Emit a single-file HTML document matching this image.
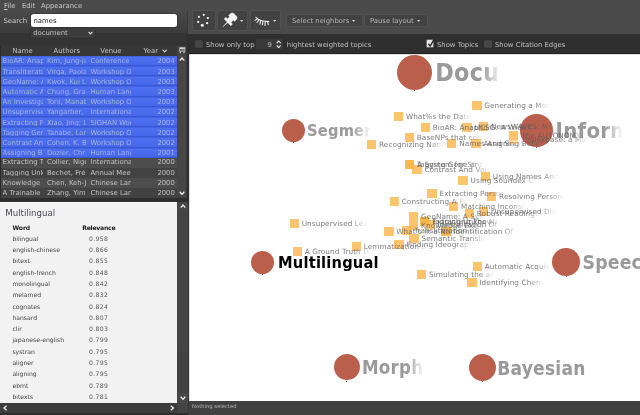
<!DOCTYPE html>
<html><head><meta charset="utf-8"><title>Topic browser</title>
<style>
html,body{margin:0;padding:0;}
body{width:640px;height:415px;overflow:hidden;background:#4a4a4a;position:relative;font-family:"DejaVu Sans","Liberation Sans",sans-serif;font-size:6.85px;color:#d0d0d0;}
.abs{position:absolute;}
.t{position:absolute;white-space:nowrap;line-height:1;}

#left{left:0;top:0;width:189px;height:415px;background:#3b3b3b;}
#search{left:30.5px;top:14px;width:146.5px;height:13px;background:#fff;border-radius:2.5px;box-shadow:0 0 0 0.6px #2a2a2a;}
#sel{left:30.5px;top:27.8px;width:64.5px;height:10.4px;background:#3c3c3c;border-radius:1.5px;box-shadow:0 0 0 0.5px #2c2c2c;}
#thead{left:1px;top:46.3px;width:185.5px;height:9.4px;background:#373737;}
.row{position:absolute;left:1px;width:175.8px;height:10.21px;box-sizing:border-box;overflow:hidden;}
.row.sel{background:linear-gradient(#4d70f0,#4567e8);border-top:0.5px solid #4262e0;border-bottom:0.9px solid #3857d4;color:#a6b1e0;}
.row.odd{background:#4d4d4d;color:#c2c2c2;}
.row.even{background:#424242;color:#c2c2c2;}
.row span{position:absolute;top:1.6px;white-space:nowrap;overflow:hidden;line-height:1;}
.c1{left:1.6px;width:40.4px;}
.c2{left:45.9px;width:39.4px;}
.c3{left:89.4px;width:41px;}
.c4{right:2px;text-align:right;}
#info{left:0;top:201.8px;width:177.2px;height:201.6px;background:#f2f2f2;color:#444;box-shadow:inset 0 0.8px 0 #fff;}
#tb2{left:187.4px;top:34.4px;width:452.6px;height:19.4px;background:#2f2f2f;}
#canvas{left:189.2px;top:54px;width:450.8px;height:346.6px;background:#fff;overflow:hidden;box-shadow:inset 0.5px 0.5px 0 #bbb;}
#status{left:189px;top:400.6px;width:451px;height:14.4px;background:#404040;}
.btn{position:absolute;background:#424242;border-radius:1.5px;box-shadow:0 0 0 0.7px #555;}
.sq{position:absolute;width:9.4px;height:9px;background:rgba(253,180,70,0.78);}
.lbl{position:absolute;white-space:nowrap;line-height:1;font-size:7.3px;letter-spacing:0.08px;color:rgba(88,88,88,0.78);width:66px;overflow:hidden;
 -webkit-mask-image:linear-gradient(to right,#000 0,#000 50px,rgba(0,0,0,0.35) 60px,transparent 66px);mask-image:linear-gradient(to right,#000 0,#000 50px,rgba(0,0,0,0.35) 60px,transparent 66px);}
.circ{position:absolute;border-radius:50%;background:#bb5f4d;}
.tl{position:absolute;white-space:nowrap;line-height:1;font-family:"DejaVu Sans Condensed","DejaVu Sans","Liberation Sans",sans-serif;font-weight:bold;overflow:hidden;letter-spacing:0.012em;}
.cb{position:absolute;width:6.2px;height:6.2px;background:#464646;border-radius:0.6px;box-shadow:0 0 0 0.6px #555;}
.chev{position:absolute;}
</style></head><body><div id="app" style="position:absolute;left:0;top:0;width:640px;height:415px;will-change:transform">

<div id="left" class="abs"></div>
<div class="abs" style="left:0;top:0;width:640px;height:34.4px;background:#4a4a4a"></div>
<div class="abs" style="left:0;top:33.4px;width:187.3px;height:12.9px;background:#343434"></div>
<div class="abs" style="left:0;top:11px;width:187.3px;height:22.4px;background:linear-gradient(#4a4a4a,#3b3b3b)"></div>
<div class="t" style="left:4px;top:3.3px;color:#c8c8c8"><u>F</u>ile</div>
<div class="t" style="left:22px;top:3.3px;color:#c8c8c8">Edit</div>
<div class="t" style="left:41px;top:3.3px;color:#c8c8c8">Appearance</div>
<div class="t" style="left:3.5px;top:18px;color:#c8c8c8">Search</div>
<div id="search" class="abs"></div><div class="t" style="left:33.5px;top:18.3px;color:#222">names</div>
<div id="sel" class="abs"></div><div class="t" style="left:33.2px;top:30.1px;color:#c4c4c4">document</div>
<svg class="chev" style="left:87.5px;top:31px" width="5" height="4" viewBox="0 0 5 4"><path d="M0.6 0.8 L2.5 2.9 L4.4 0.8" fill="none" stroke="#e0e0e0" stroke-width="1.1"/></svg>
<div id="thead" class="abs"></div>
<div class="abs" style="left:0;top:46.3px;width:1px;height:153px;background:#2a2a2a"></div>
<div class="t" style="left:12.5px;top:47.6px;color:#c4c4c4">Name</div>
<div class="t" style="left:53.5px;top:47.6px;color:#c4c4c4">Authors</div>
<div class="t" style="left:100.3px;top:47.6px;color:#c4c4c4">Venue</div>
<div class="t" style="left:143.5px;top:47.6px;color:#c4c4c4">Year</div>
<svg class="chev" style="left:161.8px;top:49.3px" width="5.4" height="4" viewBox="0 0 5.4 4"><path d="M0.6 0.7 L2.7 3 L4.8 0.7" fill="none" stroke="#d8d8d8" stroke-width="1.1"/></svg>
<div class="abs" style="left:176.8px;top:46.3px;width:9.7px;height:9.4px;background:#444"></div>
<svg class="chev" style="left:179px;top:47px" width="7" height="7" viewBox="0 0 7 7"><rect x="0.4" y="0.3" width="5.8" height="4.2" fill="#cfcfcf"/><rect x="1" y="2" width="4.6" height="0.7" fill="#444"/><rect x="1" y="3.3" width="4.6" height="0.6" fill="#444"/><rect x="0.8" y="4.5" width="1.2" height="1.6" fill="#cfcfcf"/><rect x="4.4" y="4.5" width="1.2" height="1.6" fill="#cfcfcf"/></svg>
<div class="row sel" style="top:55.70px"><span class="c1">BioAR: Anaphora Resolution</span><span class="c2">Kim, Jung-jae</span><span class="c3">Conference</span><span class="c4">2004</span></div>
<div class="row sel" style="top:65.91px"><span class="c1">Transliteration of Proper</span><span class="c2">Virga, Paola</span><span class="c3">Workshop On</span><span class="c4">2003</span></div>
<div class="row sel" style="top:76.12px"><span class="c1">GeoName: A System</span><span class="c2">Kwok, Kui Lam</span><span class="c3">Workshop On</span><span class="c4">2003</span></div>
<div class="row sel" style="top:86.33px"><span class="c1">Automatic Acquisition</span><span class="c2">Chung, Grace</span><span class="c3">Human Lang</span><span class="c4">2003</span></div>
<div class="row sel" style="top:96.54px"><span class="c1">An Investigation of</span><span class="c2">Torii, Manabu</span><span class="c3">Workshop On</span><span class="c4">2003</span></div>
<div class="row sel" style="top:106.75px"><span class="c1">Unsupervised Learning</span><span class="c2">Yangarber, Roman</span><span class="c3">International</span><span class="c4">2002</span></div>
<div class="row sel" style="top:116.96px"><span class="c1">Extracting Pronunciation</span><span class="c2">Xiao, Jing; Liu</span><span class="c3">SIGHAN Workshop</span><span class="c4">2002</span></div>
<div class="row sel" style="top:127.17px"><span class="c1">Tagging Gene and</span><span class="c2">Tanabe, Lorraine</span><span class="c3">Workshop On</span><span class="c4">2002</span></div>
<div class="row sel" style="top:137.38px"><span class="c1">Contrast And Variability</span><span class="c2">Cohen, K. B.</span><span class="c3">Workshop On</span><span class="c4">2002</span></div>
<div class="row sel" style="top:147.59px"><span class="c1">Assigning Belief Scores</span><span class="c2">Dozier, Chris</span><span class="c3">Human Lang</span><span class="c4">2001</span></div>
<div class="row odd" style="top:157.80px"><span class="c1">Extracting The Names</span><span class="c2">Collier, Nigel</span><span class="c3">International</span><span class="c4">2000</span></div>
<div class="row even" style="top:168.01px"><span class="c1">Tagging Unknown</span><span class="c2">Bechet, Frédéric</span><span class="c3">Annual Meeting</span><span class="c4">2000</span></div>
<div class="row odd" style="top:178.22px"><span class="c1">Knowledge Extraction</span><span class="c2">Chen, Keh-Jiann</span><span class="c3">Chinese Lang</span><span class="c4">2000</span></div>
<div class="row even" style="top:188.43px"><span class="c1">A Trainable Method</span><span class="c2">Zhang, Yimin</span><span class="c3">Chinese Lang</span><span class="c4">2000</span></div>
<div class="abs" style="left:176.8px;top:55.7px;width:9.7px;height:141.8px;background:#464646"></div>
<div class="abs" style="left:176.8px;top:65.5px;width:9.7px;height:114px;background:#464646"></div>
<div class="abs" style="left:176.8px;top:189.4px;width:9.7px;height:8.1px;background:#464646"></div>
<div class="abs" style="left:176.8px;top:55.7px;width:9.7px;height:9.3px;background:#464646"></div>
<svg class="chev" style="left:178.8px;top:57.4px" width="6" height="4.4" viewBox="0 0 6 4.4"><path d="M0.7 3.6 L3 1 L5.3 3.6" fill="none" stroke="#f0f0f0" stroke-width="1.3"/></svg>
<svg class="chev" style="left:178.8px;top:190.8px" width="6" height="4.4" viewBox="0 0 6 4.4"><path d="M0.7 0.8 L3 3.4 L5.3 0.8" fill="none" stroke="#f0f0f0" stroke-width="1.3"/></svg>
<div class="abs" style="left:0;top:197.5px;width:189px;height:4.4px;background:#2e2e2e"></div>
<div id="info" class="abs"></div>
<div class="t" style="left:5.3px;top:208.8px;font-size:8.6px;color:#4a4650">Multilingual</div>
<div class="t" style="left:12.4px;top:225.0px;font-size:6.1px;letter-spacing:-0.1px;font-weight:bold;color:#1a1a1a">Word</div>
<div class="t" style="left:82.3px;top:225.0px;font-size:6.1px;letter-spacing:-0.25px;font-weight:bold;color:#1a1a1a">Relevance</div>
<div class="t" style="left:12.4px;top:235.7px;font-size:6.1px;color:#444">bilingual</div>
<div class="t" style="left:89px;top:235.7px;font-size:6.1px;letter-spacing:0.35px;color:#555">0.958</div>
<div class="t" style="left:12.4px;top:247.0px;font-size:6.1px;color:#444">english-chinese</div>
<div class="t" style="left:89px;top:247.0px;font-size:6.1px;letter-spacing:0.35px;color:#555">0.866</div>
<div class="t" style="left:12.4px;top:258.3px;font-size:6.1px;color:#444">bitext</div>
<div class="t" style="left:89px;top:258.3px;font-size:6.1px;letter-spacing:0.35px;color:#555">0.855</div>
<div class="t" style="left:12.4px;top:269.6px;font-size:6.1px;color:#444">english-french</div>
<div class="t" style="left:89px;top:269.6px;font-size:6.1px;letter-spacing:0.35px;color:#555">0.848</div>
<div class="t" style="left:12.4px;top:280.9px;font-size:6.1px;color:#444">monolingual</div>
<div class="t" style="left:89px;top:280.9px;font-size:6.1px;letter-spacing:0.35px;color:#555">0.842</div>
<div class="t" style="left:12.4px;top:292.2px;font-size:6.1px;color:#444">melamed</div>
<div class="t" style="left:89px;top:292.2px;font-size:6.1px;letter-spacing:0.35px;color:#555">0.832</div>
<div class="t" style="left:12.4px;top:303.5px;font-size:6.1px;color:#444">cognates</div>
<div class="t" style="left:89px;top:303.5px;font-size:6.1px;letter-spacing:0.35px;color:#555">0.824</div>
<div class="t" style="left:12.4px;top:314.8px;font-size:6.1px;color:#444">hansard</div>
<div class="t" style="left:89px;top:314.8px;font-size:6.1px;letter-spacing:0.35px;color:#555">0.807</div>
<div class="t" style="left:12.4px;top:326.1px;font-size:6.1px;color:#444">clir</div>
<div class="t" style="left:89px;top:326.1px;font-size:6.1px;letter-spacing:0.35px;color:#555">0.803</div>
<div class="t" style="left:12.4px;top:337.4px;font-size:6.1px;color:#444">japanese-english</div>
<div class="t" style="left:89px;top:337.4px;font-size:6.1px;letter-spacing:0.35px;color:#555">0.799</div>
<div class="t" style="left:12.4px;top:348.7px;font-size:6.1px;color:#444">systran</div>
<div class="t" style="left:89px;top:348.7px;font-size:6.1px;letter-spacing:0.35px;color:#555">0.795</div>
<div class="t" style="left:12.4px;top:360.0px;font-size:6.1px;color:#444">aligner</div>
<div class="t" style="left:89px;top:360.0px;font-size:6.1px;letter-spacing:0.35px;color:#555">0.795</div>
<div class="t" style="left:12.4px;top:371.3px;font-size:6.1px;color:#444">aligning</div>
<div class="t" style="left:89px;top:371.3px;font-size:6.1px;letter-spacing:0.35px;color:#555">0.795</div>
<div class="t" style="left:12.4px;top:382.6px;font-size:6.1px;color:#444">ebmt</div>
<div class="t" style="left:89px;top:382.6px;font-size:6.1px;letter-spacing:0.35px;color:#555">0.789</div>
<div class="t" style="left:12.4px;top:393.9px;font-size:6.1px;color:#444">bitexts</div>
<div class="t" style="left:89px;top:393.9px;font-size:6.1px;letter-spacing:0.35px;color:#555">0.781</div>
<div class="abs" style="left:177.2px;top:201.8px;width:10.7px;height:201.6px;background:#424242"></div>
<div class="abs" style="left:177.2px;top:201.8px;width:10.7px;height:9.4px;background:#464646"></div>
<div class="abs" style="left:177.2px;top:393.3px;width:10.7px;height:10.1px;background:#484848"></div>
<div class="abs" style="left:177.2px;top:211.2px;width:10.7px;height:140px;background:#444"></div>
<svg class="chev" style="left:179.6px;top:204.4px" width="6" height="4.4" viewBox="0 0 6 4.4"><path d="M0.7 3.6 L3 1 L5.3 3.6" fill="none" stroke="#f0f0f0" stroke-width="1.3"/></svg>
<svg class="chev" style="left:179.6px;top:396.3px" width="6" height="4.4" viewBox="0 0 6 4.4"><path d="M0.7 0.8 L3 3.4 L5.3 0.8" fill="none" stroke="#f0f0f0" stroke-width="1.3"/></svg>
<div class="abs" style="left:0;top:403.4px;width:177.2px;height:9.6px;background:#3c3c3c"></div>
<div class="abs" style="left:177.2px;top:403.4px;width:10.7px;height:9.6px;background:#444"></div>
<div class="abs" style="left:0;top:412.7px;width:640px;height:2.3px;background:#2e2e2e"></div>
<svg class="chev" style="left:3.2px;top:405.2px" width="4.4" height="6" viewBox="0 0 4.4 6"><path d="M3.6 0.7 L1 3 L3.6 5.3" fill="none" stroke="#f0f0f0" stroke-width="1.3"/></svg>
<svg class="chev" style="left:170.2px;top:405.2px" width="4.4" height="6" viewBox="0 0 4.4 6"><path d="M0.8 0.7 L3.4 3 L0.8 5.3" fill="none" stroke="#f0f0f0" stroke-width="1.3"/></svg>
<div class="abs" style="left:187.2px;top:11px;width:1.2px;height:23.4px;background:#3a3a3a"></div>
<div class="abs" style="left:186.6px;top:34.4px;width:2.6px;height:167.6px;background:#2e2e2e"></div>
<div class="abs" style="left:187.9px;top:201.8px;width:1.3px;height:213.2px;background:#383838"></div>
<div id="tb2" class="abs"></div>
<div class="abs" style="left:189px;top:52.8px;width:451px;height:1.2px;background:#222"></div>
<div class="btn" style="left:192.5px;top:11.3px;width:22.5px;height:18.3px"></div>
<div class="btn" style="left:218.4px;top:11.3px;width:28.9px;height:18.3px"></div>
<div class="btn" style="left:251px;top:11.3px;width:29.3px;height:18.3px"></div>
<div class="btn" style="left:286.7px;top:14.5px;width:75px;height:11.9px"></div>
<div class="btn" style="left:365px;top:14.5px;width:61.7px;height:11.9px"></div>
<div class="t" style="left:292px;top:17.8px;color:#b4b4b4">Select neighbors</div>
<div class="t" style="left:370px;top:17.8px;color:#b4b4b4">Pause layout</div>
<svg class="chev" style="left:352.4px;top:20.2px" width="3.2" height="2" viewBox="0 0 3.2 2"><path d="M0 0 H3.2 L1.6 2 Z" fill="#d0d0d0"/></svg>
<svg class="chev" style="left:417.4px;top:20.2px" width="3.2" height="2" viewBox="0 0 3.2 2"><path d="M0 0 H3.2 L1.6 2 Z" fill="#d0d0d0"/></svg>
<svg class="chev" style="left:240.3px;top:19.6px" width="3.2" height="2" viewBox="0 0 3.2 2"><path d="M0 0 H3.2 L1.6 2 Z" fill="#d0d0d0"/></svg>
<svg class="chev" style="left:273.2px;top:19.9px" width="3.2" height="2" viewBox="0 0 3.2 2"><path d="M0 0 H3.2 L1.6 2 Z" fill="#d0d0d0"/></svg>
<svg class="chev" style="left:196.3px;top:13.2px" width="14" height="14" viewBox="0 0 14 14"><circle cx="7.72" cy="1.85" r="1.1" fill="#f2f2f2"/><circle cx="11.82" cy="5.05" r="1.15" fill="#f2f2f2"/><circle cx="11.10" cy="10.20" r="1.15" fill="#f2f2f2"/><circle cx="6.28" cy="12.15" r="1.5" fill="#f2f2f2"/><circle cx="2.18" cy="8.95" r="1.1" fill="#f2f2f2"/><circle cx="2.90" cy="3.80" r="1.1" fill="#f2f2f2"/></svg>
<svg class="chev" style="left:216px;top:8px" width="34" height="24" viewBox="0 0 34 24"><path d="M6.65 19.08 L11.08 14.10 L8.34 11.29 L8.39 10.51 L9.43 9.51 L10.20 9.47 L11.49 10.80 L13.65 8.70 L12.68 7.71 L12.89 7.10 L14.88 5.16 L16.31 4.81 L17.78 5.40 L20.60 8.30 L21.15 9.78 L20.77 11.20 L18.78 13.14 L18.17 13.34 L17.20 12.34 L15.04 14.44 L16.34 15.77 L16.28 16.54 L15.25 17.55 L14.47 17.58 L11.73 14.77 Z" fill="#f2f2f2" stroke="#f2f2f2" stroke-width="0.3" stroke-linejoin="round"/></svg>
<svg class="chev" style="left:249px;top:8px" width="34" height="24" viewBox="0 0 34 24"><g fill="none" stroke="#f2f2f2" stroke-width="1.05" stroke-linecap="round"><path d="M6.9 9.3 C8.4 11 10.6 12.2 13 12.8 C15.4 13.3 17.8 13.4 19.9 13.4"/><path d="M7.9 11.1 L5.9 12.4"/><path d="M9.6 12.2 L8 14.5"/><path d="M11.7 13 L10.8 16.1"/><path d="M13.9 13.4 L13.4 16.8"/><path d="M16.2 13.6 L16 17.5"/><path d="M18.5 13.6 L19.3 16.7"/></g></svg>
<div class="cb" style="left:195.8px;top:41.2px"></div>
<div class="t" style="left:206px;top:41.5px;color:#c0c0c0">Show only top</div>
<div class="abs" style="left:256.3px;top:38.8px;width:27.2px;height:10.4px;background:#3a3a3a;border-radius:1.5px"></div>
<div class="t" style="left:267.5px;top:41.5px;color:#c0c0c0">9</div>
<svg class="chev" style="left:275.6px;top:39.8px" width="5.4" height="8.6" viewBox="0 0 5.4 8.6"><path d="M0.7 3.2 L2.7 1 L4.7 3.2 M0.7 5.4 L2.7 7.6 L4.7 5.4" fill="none" stroke="#eee" stroke-width="1.1"/></svg>
<div class="t" style="left:286.8px;top:41.5px;color:#c0c0c0">hightest weighted topics</div>
<div class="cb" style="left:427.3px;top:40.4px;background:#e6e6e6;box-shadow:0 0 0 0.6px #999"></div>
<svg class="chev" style="left:427px;top:38.6px" width="8" height="9" viewBox="0 0 8 9"><path d="M1.4 4.8 L3.2 7 L6.6 1.2" fill="none" stroke="#222" stroke-width="1.3"/></svg>
<div class="t" style="left:437px;top:41.5px;color:#c0c0c0">Show Topics</div>
<div class="cb" style="left:484.6px;top:40.6px"></div>
<div class="t" style="left:495px;top:41.5px;color:#c0c0c0">Show Citation Edges</div>
<div id="canvas" class="abs">
<div class="circ" style="left:207.8px;top:0.6px;width:35.2px;height:35.2px"></div>
<div class="abs" style="left:224.9px;top:36.2px;width:1px;height:1px;background:#766"></div>
<div class="circ" style="left:92.7px;top:65.0px;width:23px;height:23px"></div>
<div class="abs" style="left:103.7px;top:88.4px;width:1px;height:1px;background:#766"></div>
<div class="circ" style="left:331.3px;top:60.3px;width:32.5px;height:32.5px"></div>
<div class="abs" style="left:347.1px;top:93.2px;width:1px;height:1px;background:#766"></div>
<div class="circ" style="left:62.3px;top:196.5px;width:23px;height:23px"></div>
<div class="abs" style="left:73.3px;top:219.9px;width:1px;height:1px;background:#766"></div>
<div class="circ" style="left:363.1px;top:194.0px;width:28px;height:28px"></div>
<div class="abs" style="left:376.6px;top:222.4px;width:1px;height:1px;background:#766"></div>
<div class="circ" style="left:144.8px;top:300.2px;width:26px;height:26px"></div>
<div class="abs" style="left:157.3px;top:326.6px;width:1px;height:1px;background:#766"></div>
<div class="circ" style="left:279.5px;top:299.5px;width:27px;height:27px"></div>
<div class="abs" style="left:292.5px;top:326.9px;width:1px;height:1px;background:#766"></div>
<div class="tl" style="left:246.0px;top:6.5px;font-size:24.8px;color:#9a9a9a;height:31.0px;width:66px;-webkit-mask-image:linear-gradient(to right,#000 0,#000 48px,transparent 66px);mask-image:linear-gradient(to right,#000 0,#000 48px,transparent 66px);">Document</div>
<div class="tl" style="left:117.9px;top:68.6px;font-size:16.3px;color:#9a9a9a;height:20.4px;width:64px;-webkit-mask-image:linear-gradient(to right,#000 0,#000 46px,transparent 64px);mask-image:linear-gradient(to right,#000 0,#000 46px,transparent 64px);">Segmentation</div>
<div class="tl" style="left:366.4px;top:66.2px;font-size:22px;color:#9a9a9a;height:27.5px;width:67px;-webkit-mask-image:linear-gradient(to right,#000 0,#000 48px,transparent 67px);mask-image:linear-gradient(to right,#000 0,#000 48px,transparent 67px);">Information</div>
<div class="tl" style="left:88.9px;top:200.5px;font-size:16.3px;color:#000;height:20.4px;">Multilingual</div>
<div class="tl" style="left:393.3px;top:198.7px;font-size:19.2px;color:#9a9a9a;height:24.0px;width:80px;-webkit-mask-image:linear-gradient(to right,#000 0,#000 58px,transparent 80px);mask-image:linear-gradient(to right,#000 0,#000 58px,transparent 80px);">Speech</div>
<div class="tl" style="left:172.7px;top:304.9px;font-size:18.6px;color:#9a9a9a;height:23.2px;width:62px;-webkit-mask-image:linear-gradient(to right,#000 0,#000 45px,transparent 62px);mask-image:linear-gradient(to right,#000 0,#000 45px,transparent 62px);">Morphology</div>
<div class="tl" style="left:308.1px;top:304.7px;font-size:19px;color:#9a9a9a;height:23.8px;">Bayesian</div>
<div class="sq" style="left:283.0px;top:47.1px"></div>
<div class="sq" style="left:204.6px;top:57.5px"></div>
<div class="sq" style="left:231.5px;top:68.9px"></div>
<div class="sq" style="left:273.2px;top:68.5px"></div>
<div class="sq" style="left:289.6px;top:67.9px"></div>
<div class="sq" style="left:215.5px;top:78.8px"></div>
<div class="sq" style="left:177.7px;top:86.0px"></div>
<div class="sq" style="left:257.9px;top:84.5px"></div>
<div class="sq" style="left:282.1px;top:85.0px"></div>
<div class="sq" style="left:319.9px;top:76.5px"></div>
<div class="sq" style="left:215.5px;top:105.6px"></div>
<div class="sq" style="left:215.7px;top:105.8px"></div>
<div class="sq" style="left:223.1px;top:110.8px"></div>
<div class="sq" style="left:269.3px;top:121.8px"></div>
<div class="sq" style="left:291.5px;top:117.9px"></div>
<div class="sq" style="left:238.2px;top:135.0px"></div>
<div class="sq" style="left:297.8px;top:137.7px"></div>
<div class="sq" style="left:200.4px;top:143.2px"></div>
<div class="sq" style="left:259.8px;top:147.5px"></div>
<div class="sq" style="left:275.5px;top:154.7px"></div>
<div class="sq" style="left:289.7px;top:152.5px"></div>
<div class="sq" style="left:219.8px;top:157.5px"></div>
<div class="sq" style="left:219.8px;top:167.1px"></div>
<div class="sq" style="left:230.6px;top:162.5px"></div>
<div class="sq" style="left:230.9px;top:162.8px"></div>
<div class="sq" style="left:236.1px;top:165.9px"></div>
<div class="sq" style="left:195.0px;top:173.2px"></div>
<div class="sq" style="left:212.6px;top:172.1px"></div>
<div class="sq" style="left:252.1px;top:172.5px"></div>
<div class="sq" style="left:252.3px;top:172.7px"></div>
<div class="sq" style="left:220.2px;top:179.9px"></div>
<div class="sq" style="left:205.1px;top:186.2px"></div>
<div class="sq" style="left:162.4px;top:188.0px"></div>
<div class="sq" style="left:100.4px;top:164.5px"></div>
<div class="sq" style="left:103.4px;top:193.1px"></div>
<div class="sq" style="left:227.7px;top:215.7px"></div>
<div class="sq" style="left:283.4px;top:207.5px"></div>
<div class="sq" style="left:278.1px;top:223.8px"></div>
<div class="lbl" style="left:295.1px;top:48.2px;height:9.2px">Generating a Morphological</div>
<div class="lbl" style="left:216.7px;top:58.6px;height:9.2px">What%s the Date?</div>
<div class="lbl" style="left:243.6px;top:70.0px;height:9.2px">BioAR: Anaphora Resolution</div>
<div class="lbl" style="left:285.3px;top:69.6px;height:9.2px">UCSG: A Wide Coverage</div>
<div class="lbl" style="left:301.7px;top:69.0px;height:9.2px">NewsWAVES: M&amp;I Disambiguation</div>
<div class="lbl" style="left:227.6px;top:79.9px;height:9.2px">BaseNPs that contain</div>
<div class="lbl" style="left:189.8px;top:87.1px;height:9.2px">Recognizing Names in</div>
<div class="lbl" style="left:270.0px;top:85.6px;height:9.2px">Names And Similarities</div>
<div class="lbl" style="left:294.2px;top:86.1px;height:9.2px">Assigning Belief Scores</div>
<div class="lbl" style="left:332.0px;top:77.6px;height:9.2px">The AUTONOMY System</div>
<div class="lbl" style="left:227.6px;top:106.7px;height:9.2px">Tagging Gene and</div>
<div class="lbl" style="left:227.8px;top:106.9px;height:9.2px">A System for String</div>
<div class="lbl" style="left:235.2px;top:111.9px;height:9.2px">Contrast And Variability</div>
<div class="lbl" style="left:281.4px;top:122.9px;height:9.2px">Using Soundex Codes</div>
<div class="lbl" style="left:303.6px;top:119.0px;height:9.2px">Using Names And Topics</div>
<div class="lbl" style="left:250.3px;top:136.1px;height:9.2px">Extracting Personal</div>
<div class="lbl" style="left:309.9px;top:138.8px;height:9.2px">Resolving Personal</div>
<div class="lbl" style="left:212.5px;top:144.3px;height:9.2px">Constructing A Proper</div>
<div class="lbl" style="left:271.9px;top:148.6px;height:9.2px">Matching Inconsistently</div>
<div class="lbl" style="left:287.6px;top:155.8px;height:9.2px">Robust Reading: Identification</div>
<div class="lbl" style="left:301.8px;top:153.6px;height:9.2px">Unsupervised Discrimination</div>
<div class="lbl" style="left:231.9px;top:158.6px;height:9.2px">GeoName: A System</div>
<div class="lbl" style="left:231.9px;top:168.2px;height:9.2px">Knowledge Extraction</div>
<div class="lbl" style="left:242.7px;top:163.6px;height:9.2px">Tagging Unknown Proper</div>
<div class="lbl" style="left:243.0px;top:163.9px;height:9.2px">Extracting The Names</div>
<div class="lbl" style="left:248.2px;top:167.0px;height:9.2px">Identification Of</div>
<div class="lbl" style="left:207.1px;top:174.3px;height:9.2px">What's in a Name: Current</div>
<div class="lbl" style="left:224.7px;top:173.2px;height:9.2px">Transliteration of Proper</div>
<div class="lbl" style="left:264.2px;top:173.6px;height:9.2px">Identification Of</div>
<div class="lbl" style="left:232.3px;top:181.0px;height:9.2px">Semantic Transliteration</div>
<div class="lbl" style="left:217.2px;top:187.3px;height:9.2px">Finding Ideographic</div>
<div class="lbl" style="left:174.5px;top:189.1px;height:9.2px">Lemmatization of Multi</div>
<div class="lbl" style="left:112.5px;top:165.6px;height:9.2px">Unsupervised Learning</div>
<div class="lbl" style="left:115.5px;top:194.2px;height:9.2px">A Ground Truth Dataset</div>
<div class="lbl" style="left:239.8px;top:216.8px;height:9.2px">Simulating the acquisition</div>
<div class="lbl" style="left:295.5px;top:208.6px;height:9.2px">Automatic Acquisition</div>
<div class="lbl" style="left:290.2px;top:224.9px;height:9.2px">Identifying Chemical</div>
<div class="sq" style="left:319.6px;top:86.4px;height:3.4px;opacity:0.6"></div>
<div class="lbl" style="left:333.4px;top:82.1px;height:9.2px">Prolexbase: a Multilingual</div>
</div>
<div id="status" class="abs"></div>
<div class="t" style="left:192px;top:404.1px;font-size:5.25px;color:#b4b4b4">Nothing selected</div>
</div></body></html>
